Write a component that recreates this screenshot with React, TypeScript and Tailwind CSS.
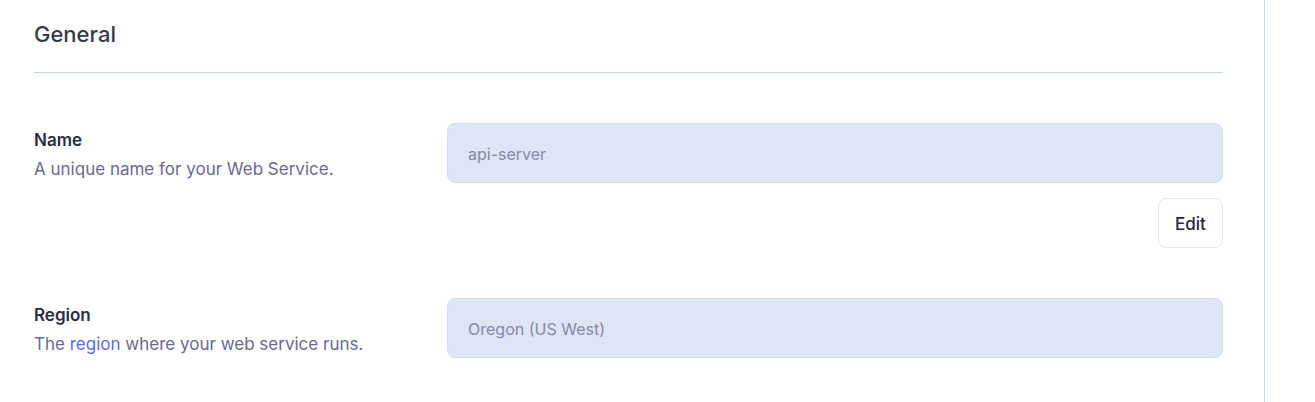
import React from 'react';

function FieldRow({
  label,
  description,
  value,
  editable,
}: {
  label: string;
  description: React.ReactNode;
  value: string;
  editable?: boolean;
}) {
  return (
    <div className="flex">
      <div className="w-[413px] shrink-0 pt-[5px]">
        <div className="text-[17px] leading-6 font-semibold text-[#2b2b45]">{label}</div>
        <div className="text-[17px] leading-6 mt-[5px] text-[#6b6a8e]">{description}</div>
      </div>
      <div className="flex-1 flex flex-col items-end">
        <div className="w-full h-[60px] rounded-lg border border-[#d3dcf2] bg-[#dee5f7] flex items-center px-5 pt-[2px] text-[16px] text-[#8787a6]">
          {value}
        </div>
        {editable && (
          <button className="mt-[15px] w-[65px] h-[50px] rounded-lg border border-[#dfe6f5] bg-white pt-[3px] text-[17px] font-medium text-[#26263f]">
            Edit
          </button>
        )}
      </div>
    </div>
  );
}

export default function App() {
  return (
    <div className="w-[1315px] h-[402px] bg-white overflow-hidden font-['Inter',sans-serif]">
      <div className="w-[1265px] h-full border-r border-[#cddcf0] pl-[34px] pr-[41px]">
        <div className="pt-[20px] pb-[24px] border-b border-[#c5d7ef]">
          <h2 className="text-[22px] leading-7 font-medium text-[#363a4b]">General</h2>
        </div>
        <div className="pt-[50px] flex flex-col gap-[50px]">
          <FieldRow
            label="Name"
            description="A unique name for your Web Service."
            value="api-server"
            editable
          />
          <FieldRow
            label="Region"
            description={
              <>
                The <a className="text-[#5a6bf0]">region</a> where your web service runs.
              </>
            }
            value="Oregon (US West)"
          />
        </div>
      </div>
    </div>
  );
}
